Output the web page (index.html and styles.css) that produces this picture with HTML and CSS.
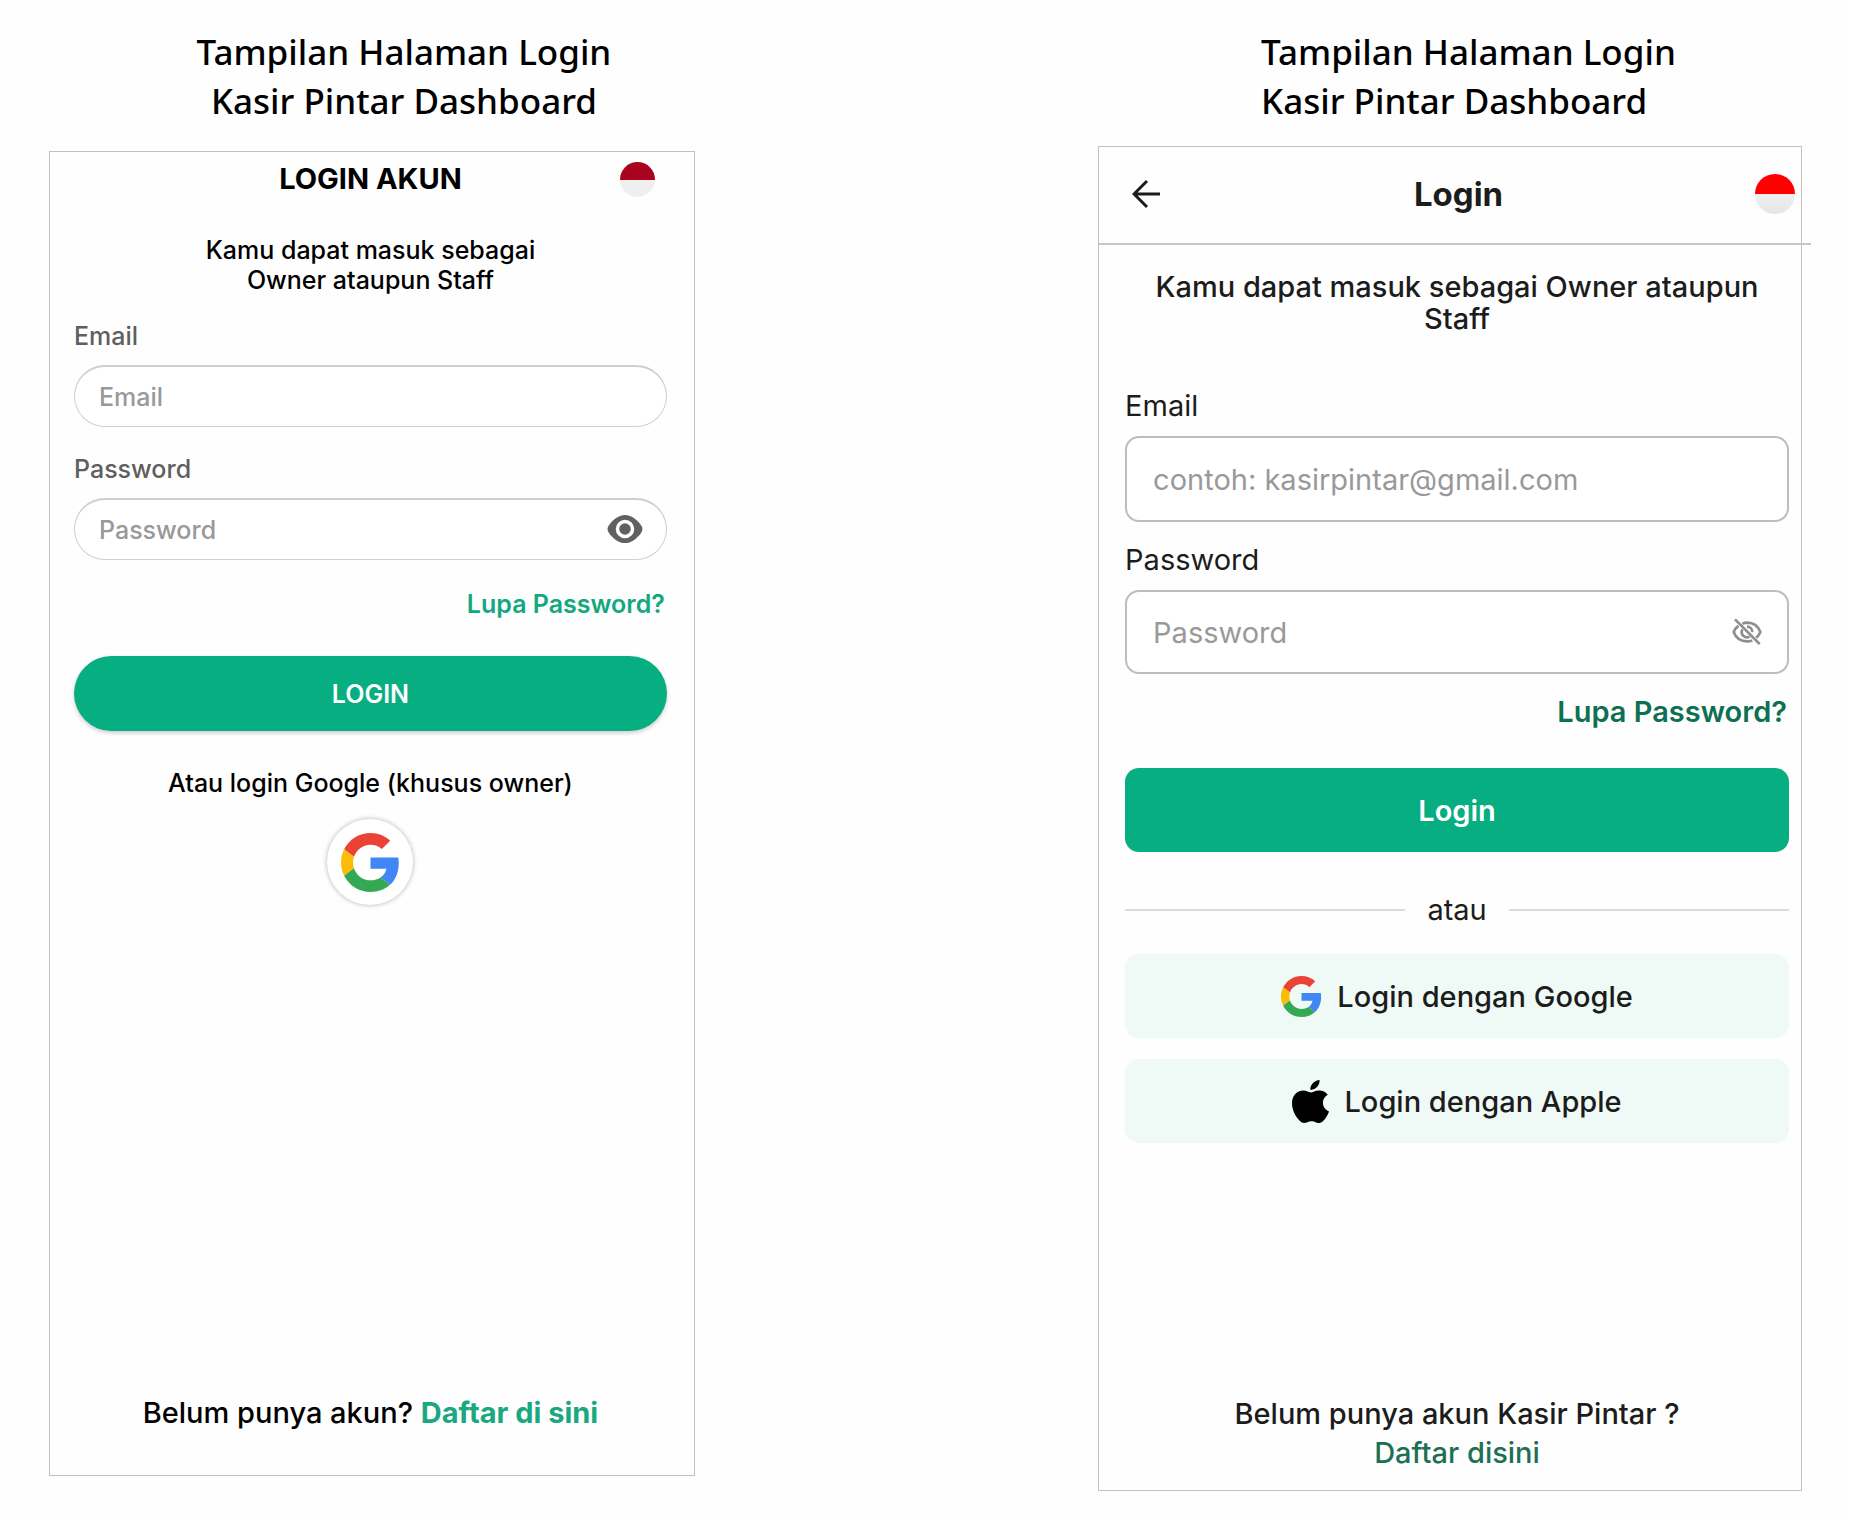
FILE: index.html
```html
<!DOCTYPE html>
<html lang="id">
<head>
    <meta charset="utf-8">
    <title>Kasir Pintar Login</title>
    <link rel="stylesheet" href="styles.css">
</head>
<body>

    <!-- shared shapes -->
    <svg class="defs" width="0" height="0">
        <symbol id="google" viewBox="0 0 48 48">
            <path fill="#EA4335" d="M24 9.5c3.54 0 6.71 1.22 9.21 3.6l6.85-6.85C35.9 2.38 30.47 0 24 0 14.62 0 6.51 5.38 2.56 13.22l7.98 6.19C12.43 13.72 17.74 9.5 24 9.5z"/>
            <path fill="#4285F4" d="M46.98 24.55c0-1.57-.15-3.09-.38-4.55H24v9.02h12.94c-.58 2.96-2.26 5.48-4.78 7.18l7.73 6c4.51-4.18 7.09-10.36 7.09-17.65z"/>
            <path fill="#FBBC05" d="M10.53 28.59c-.48-1.45-.76-2.99-.76-4.59s.27-3.14.76-4.59l-7.98-6.19C.92 16.46 0 20.12 0 24c0 3.88.92 7.54 2.56 10.78l7.97-6.19z"/>
            <path fill="#34A853" d="M24 48c6.48 0 11.93-2.13 15.89-5.81l-7.73-6c-2.15 1.45-4.92 2.3-8.16 2.3-6.26 0-11.57-4.22-13.47-9.91l-7.98 6.19C6.51 42.62 14.62 48 24 48z"/>
        </symbol>
    </svg>

    <main class="page">
        <section class="column">
            <h1 class="caption caption-center">Tampilan Halaman Login<br>Kasir Pintar Dashboard</h1>

            <form class="card old">
                <header class="old-header">
                    <h2>LOGIN AKUN</h2>
                    <span class="flag flag-dark"></span>
                </header>
                <p class="intro">Kamu dapat masuk sebagai<br>Owner ataupun Staff</p>

                <label for="old-email">Email</label>
                <input id="old-email" type="email" placeholder="Email">
                <label for="old-password">Password</label>
                <div class="password">
                    <input id="old-password" type="password" placeholder="Password">
                    <button type="button" class="eye" aria-label="Lihat password">
                        <svg width="42" height="42" viewBox="0 0 24 24" fill="#616161">
                            <path d="M12 4C8 4 5 7 3 9.500Q1 12 3 14.500C5 17 8 20 12 20s7-3 9-5.500q2-2.500 0-5C19 7 16 4 12 4zM12 17.300a5.300 5.300 0 1 1 0-10.600 5.300 5.300 0 0 1 0 10.600zm0-8.600a3.300 3.300 0 1 0 0 6.600 3.300 3.300 0 0 0 0-6.600z"/>
                        </svg>
                    </button>
                </div>
                <a class="forgot" href="#">Lupa Password?</a>
                <button type="submit" class="submit">LOGIN</button>

                <p class="alt">Atau login Google (khusus owner)</p>
                <button type="button" class="google-round" aria-label="Login Google">
                    <svg width="59" height="59"><use href="#google"/></svg>
                </button>

                <footer>Belum punya akun? <a href="#">Daftar di sini</a></footer>
            </form>
        </section>

        <section class="column">
            <h1 class="caption caption-left">Tampilan Halaman Login<br>Kasir Pintar Dashboard</h1>

            <form class="card new">
                <header class="new-header">
                    <button type="button" class="back" aria-label="Kembali">
                        <svg width="30" height="30" viewBox="0 0 30 30" fill="none" stroke="#1c1c1c" stroke-width="3">
                            <path d="M28 15H3M15 2L2 15l13 13"/>
                        </svg>
                    </button>
                    <h2>Login</h2>
                    <span class="flag flag-bright"></span>
                </header>

                <div class="new-body">
                    <p class="intro">Kamu dapat masuk sebagai Owner ataupun Staff</p>

                    <label for="new-email">Email</label>
                    <input id="new-email" type="email" placeholder="contoh: kasirpintar@gmail.com">
                    <label for="new-password">Password</label>
                    <div class="password">
                        <input id="new-password" type="password" placeholder="Password">
                        <button type="button" class="eye" aria-label="Lihat password">
                            <svg width="32" height="32" viewBox="0 0 24 24" fill="none" stroke="#8e8e8e" stroke-width="2">
                                <path d="M8.500 5.800A10 10 0 0 1 12 5c5 0 8.500 3 10 7a11 11 0 0 1-3 4.300M16 18.300A10 10 0 0 1 12 19c-5 0-8.500-3-10-7a11 11 0 0 1 3.500-4.600"/>
                                <path d="M12 8a4 4 0 0 1 4 4M8.600 10a4 4 0 0 0 5.400 5.500"/>
                                <path d="M3 2.500L21.500 21"/>
                            </svg>
                        </button>
                    </div>
                    <a class="forgot" href="#">Lupa Password?</a>
                    <button type="submit" class="submit">Login</button>

                    <div class="divider">atau</div>

                    <button type="button" class="social">
                        <svg width="41" height="41"><use href="#google"/></svg>
                        Login dengan Google
                    </button>
                    <button type="button" class="social">
                        <svg width="37" height="43" viewBox="0 0 814 1000" preserveAspectRatio="none">
                            <path d="M788 341c-6 4-108 62-108 190 0 148 130 200 134 202-1 3-21 72-69 142-43 61-87 123-155 123s-85-40-163-40c-76 0-103 41-165 41s-105-57-155-127C49 790 0 663 0 542c0-194 126-297 250-297 66 0 121 43 163 43 39 0 101-46 176-46 29 0 131 3 199 99zM554 159c31-37 53-88 53-139 0-7-1-14-2-20-51 2-111 34-147 76-29 32-55 84-55 135 0 8 1 16 2 18 3 1 8 1 14 1 45 0 103-30 135-71z"/>
                        </svg>
                        Login dengan Apple
                    </button>

                    <footer>Belum punya akun Kasir Pintar ?<br><a href="#">Daftar disini</a></footer>
                </div>
            </form>
        </section>
    </main>

</body>
</html>
```
FILE: styles.css
```css
* {
    box-sizing: border-box;
}

body {
    margin: 0;
    background: #fefefe;
    font-family: Inter, "Open Sans", sans-serif;
    color: #000;
}

h1, h2, p {
    margin: 0;
}

a {
    text-decoration: none;
}

button {
    border: 0;
    padding: 0;
    background: none;
    font-family: inherit;
    cursor: pointer;
}

svg {
    display: block;
}

.defs {
    position: absolute;
}

.page {
    display: grid;
    grid-template-columns: 646fr 704fr;
    column-gap: 23%;
    min-height: 100vh;
    padding: 27px 47px 25px 49px;
}

.column {
    display: flex;
    flex-direction: column;
}

.column:first-child {
    padding-bottom: 15px;
}

.caption {
    font-family: "Noto Sans", "Open Sans", sans-serif;
    font-size: 35px;
    font-weight: 500;
    line-height: 49px;
}

.caption-center {
    padding-left: 64px;
    margin-bottom: 26px;
    text-align: center;
}

.caption-left {
    padding-left: 163px;
    margin-bottom: 21px;
}

.card {
    flex: 1;
    display: flex;
    flex-direction: column;
    border: 1px solid #c0c0c0;
}

.flag {
    border-radius: 50%;
}

.intro {
    font-weight: 500;
    text-align: center;
}

input {
    display: block;
    width: 100%;
    background: #fff;
    font-family: inherit;
    color: inherit;
}

input::placeholder {
    color: #999;
    opacity: 1;
}

.password {
    position: relative;
}

/* sits over the right end of the password box */
.eye {
    position: absolute;
    top: 0;
    bottom: 0;
}

.forgot {
    align-self: flex-end;
    font-weight: 600;
}

.submit {
    background: #07ae82;
    color: #fff;
    font-weight: 600;
}

footer {
    margin-top: auto;
    text-align: center;
    font-weight: 500;
}

/* old login page */
.old {
    padding: 9px 27px 46px 24px;
    font-size: 25px;
    line-height: 30px;
}

.old-header {
    display: grid;
    grid-template-columns: 35px 1fr 35px;
    align-items: center;
    padding-right: 12px;
    padding-left: 12px;
}

.old-header h2 {
    grid-column: 2;
    font-size: 29px;
    font-weight: 700;
    line-height: 36px;
    text-align: center;
}

.flag-dark {
    height: 35px;
    background: linear-gradient(#a90320 50%, #efefef 50%);
}

.old .intro {
    margin: 38px 0 26px;
}

.old label {
    margin-bottom: 14px;
    color: #5f5f5f;
    font-weight: 500;
}

.old input {
    height: 62px;
    padding: 0 24px;
    border: 1px solid #cfcfcf;
    border-top-width: 2px;
    border-radius: 31px;
    font-size: 25px;
    font-weight: 500;
}

.old input + label {
    margin-top: 27px;
}

.old .eye {
    right: 21px;
}

.old .forgot {
    margin: 29px 2px 37px 0;
    color: #12a880;
}

.old .submit {
    height: 75px;
    border-radius: 38px;
    box-shadow: 0 2px 4px rgba(0, 0, 0, 0.2);
    font-size: 25px;
}

.alt {
    margin: 37px 0 21px;
    font-weight: 500;
    text-align: center;
}

.google-round {
    display: grid;
    place-items: center;
    align-self: center;
    width: 86px;
    height: 86px;
    border-radius: 50%;
    background: #fff;
    box-shadow: 0 0 5px rgba(0, 0, 0, 0.3);
}

.old footer {
    font-size: 29px;
    line-height: 32px;
}

.old footer a {
    color: #1aa880;
    font-weight: 700;
}

/* new login page */
.new {
    color: #1c1c1c;
    font-size: 29px;
    line-height: 32px;
}

.new-header {
    display: grid;
    grid-template-columns: 30px 1fr 40px;
    align-items: center;
    height: 98px;
    margin-right: -10px;
    padding: 0 16px 2px 33px;
    border-bottom: 2px solid #c6c6c6;
}

.new-header h2 {
    font-size: 33px;
    font-weight: 700;
    text-align: center;
}

.flag-bright {
    height: 40px;
    background: linear-gradient(#f00 50%, #f0f0f0 50%, #e6e6e6);
}

.new-body {
    flex: 1;
    display: flex;
    flex-direction: column;
    padding: 26px 12px 18px 26px;
}

.new .intro {
    margin-bottom: 55px;
}

.new label {
    margin-bottom: 14px;
}

.new input {
    height: 86px;
    padding: 0 26px;
    border: 2px solid #bdbdbd;
    border-radius: 14px;
    font-size: 29px;
}

.new input + label {
    margin-top: 22px;
}

.new .password input {
    height: 84px;
}

.new .eye {
    right: 26px;
}

.new .forgot {
    margin: 22px 2px 40px 0;
    color: #0d7052;
}

.new .submit {
    height: 84px;
    border-radius: 14px;
    font-size: 29px;
}

.divider {
    display: flex;
    align-items: center;
    gap: 22px;
    margin: 42px 0 28px;
}

.divider::before,
.divider::after {
    content: "";
    flex: 1;
    height: 2px;
    background: #dadada;
}

.social {
    display: flex;
    align-items: center;
    justify-content: center;
    gap: 15px;
    height: 84px;
    border-radius: 14px;
    background: #effaf6;
    color: #1c1c1c;
    font-size: 29px;
    font-weight: 500;
}

.social + .social {
    margin-top: 21px;
}

.new footer {
    line-height: 39px;
}

.new footer a {
    color: #1c7054;
}
```
